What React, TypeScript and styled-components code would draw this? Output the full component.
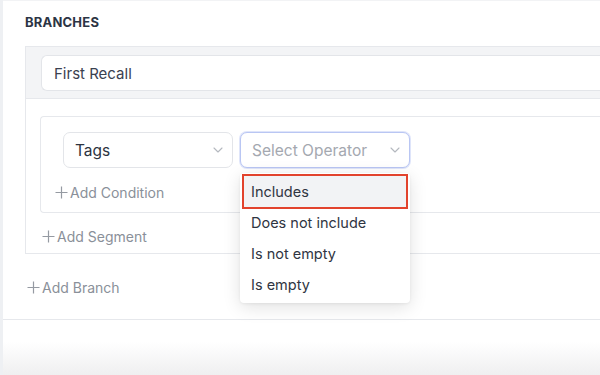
import React from 'react'
import styled, { createGlobalStyle, css } from 'styled-components'

const GlobalStyle = createGlobalStyle`
	html, body {
		margin: 0;
		padding: 0;
		background: #eef0f3;
		font-family: Inter, "Noto Sans", "Liberation Sans", sans-serif;
		-webkit-font-smoothing: antialiased;
	}
	body {
		width: 600px;
		height: 375px;
		overflow: hidden;
	}
`

const operators = ['Includes', 'Does not include', 'Is not empty', 'Is empty']

const Chevron: React.FC = () => (
	<svg width="10" height="6" viewBox="0 0 10 6" fill="none">
		<path d="M1 1l4 4 4-4" stroke="#b4b8bf" strokeWidth="1.1" strokeLinecap="round" strokeLinejoin="round" />
	</svg>
)

const Plus: React.FC = () => (
	<svg width="13" height="13" viewBox="0 0 13 13" fill="none">
		<path d="M6.5 0.5v12M0.5 6.5h12" stroke="#959aa2" strokeWidth="1.2" />
	</svg>
)

const App: React.FC = () => {
	return (
		<>
			<GlobalStyle />
			<StyledPage>
				<StyledPanel>
					<StyledHeading>BRANCHES</StyledHeading>
					<StyledBranchCard>
						<StyledBranchHeader>
							<StyledNameInput value="First Recall" readOnly />
						</StyledBranchHeader>
						<StyledBranchBody>
							<StyledSegmentCard>
								<StyledConditionRow>
									<StyledSelect>
										<span>Tags</span>
										<Chevron />
									</StyledSelect>
									<StyledOperatorWrap>
										<StyledSelect $focused $placeholder>
											<span>Select Operator</span>
											<Chevron />
										</StyledSelect>
										<StyledMenu>
											{operators.map((op, i) => (
												<StyledMenuItem key={op} $active={i === 0}>
													{op}
												</StyledMenuItem>
											))}
										</StyledMenu>
									</StyledOperatorWrap>
								</StyledConditionRow>
								<StyledAddLink $offset={-8} $top={12}>
									<Plus />
									Add Condition
								</StyledAddLink>
							</StyledSegmentCard>
							<StyledAddLink $offset={2} $top={11}>
								<Plus />
								Add Segment
							</StyledAddLink>
						</StyledBranchBody>
					</StyledBranchCard>
					<StyledAddLink $offset={2} $top={21}>
						<Plus />
						Add Branch
					</StyledAddLink>
				</StyledPanel>
				<StyledFooter />
			</StyledPage>
		</>
	)
}

const StyledPage = styled.div`
	margin-left: 3px;
	width: 597px;
	height: 375px;
	display: flex;
	flex-direction: column;
	background: #fff;
	overflow: hidden;
`

const StyledPanel = styled.div`
	border-top: 1px solid #f2f3f5;
	border-bottom: 1px solid #e6e8ec;
	padding: 13px 0 20px 22px;
	background: #fff;
`

const StyledHeading = styled.div`
	font-size: 13px;
	line-height: 16px;
	font-weight: 700;
	letter-spacing: 0.2px;
	color: #2c3444;
	margin-bottom: 16px;
`

const StyledBranchCard = styled.div`
	border: 1px solid #e6e8ec;
	border-right: none;
`

const StyledBranchHeader = styled.div`
	background: #f3f4f6;
	padding: 8px 0 7px 15px;
	border-bottom: 1px solid #e6e8ec;
`

const StyledNameInput = styled.input`
	box-sizing: border-box;
	display: block;
	width: 100%;
	height: 36px;
	padding: 0 12px;
	border: 1px solid #e3e5e9;
	border-right: none;
	border-radius: 6px 0 0 6px;
	background: #fff;
	font-family: inherit;
	font-size: 15px;
	color: #3a4150;
	outline: none;
`

const StyledBranchBody = styled.div`
	padding: 17px 0 5px 14px;
`

const StyledSegmentCard = styled.div`
	border: 1px solid #e6e8ec;
	border-right: none;
	border-radius: 4px 0 0 4px;
	padding: 15px 0 8px 22px;
`

const StyledConditionRow = styled.div`
	display: flex;
	gap: 7px;
`

const StyledOperatorWrap = styled.div`
	position: relative;
`

const StyledSelect = styled.div<{ $focused?: boolean; $placeholder?: boolean }>`
	box-sizing: border-box;
	width: 170px;
	height: 36px;
	display: flex;
	align-items: center;
	justify-content: space-between;
	padding: 0 9px 0 11px;
	border: 1px solid #e3e5e9;
	border-radius: 7px;
	background: #fff;
	font-size: 15.5px;
	color: #2d3340;

	${(props) =>
		props.$focused &&
		css`
			border-color: #b9c6f3;
			box-shadow: 0 0 0 1px #dfe5fa;
		`}

	${(props) =>
		props.$placeholder &&
		css`
			color: #a4a8b0;
		`}
`

const StyledMenu = styled.div`
	position: absolute;
	top: 41px;
	left: 0;
	width: 170px;
	box-sizing: border-box;
	padding: 3px 4px 3px;
	background: #fff;
	border-radius: 4px;
	box-shadow: 0 4px 18px rgba(0, 0, 0, 0.12), 0 1px 3px rgba(0, 0, 0, 0.06);
	z-index: 2;
`

const StyledMenuItem = styled.div<{ $active?: boolean }>`
	height: 31px;
	display: flex;
	align-items: center;
	padding-left: 7px;
	font-size: 14.5px;
	color: #2f3542;

	${(props) =>
		props.$active &&
		css`
			background: #f2f3f5;
			outline: 2px solid #e2432d;
		`}
`

const StyledAddLink = styled.div<{ $offset: number; $top: number }>`
	display: flex;
	align-items: center;
	gap: 2px;
	height: 24px;
	margin-top: ${(props) => props.$top}px;
	margin-left: ${(props) => props.$offset}px;
	font-size: 14px;
	color: #8a9099;
`

const StyledFooter = styled.div`
	flex: 1;
	background: linear-gradient(to bottom, #fff 0%, #fff 40%, #efeff0 100%);
`

export default App
